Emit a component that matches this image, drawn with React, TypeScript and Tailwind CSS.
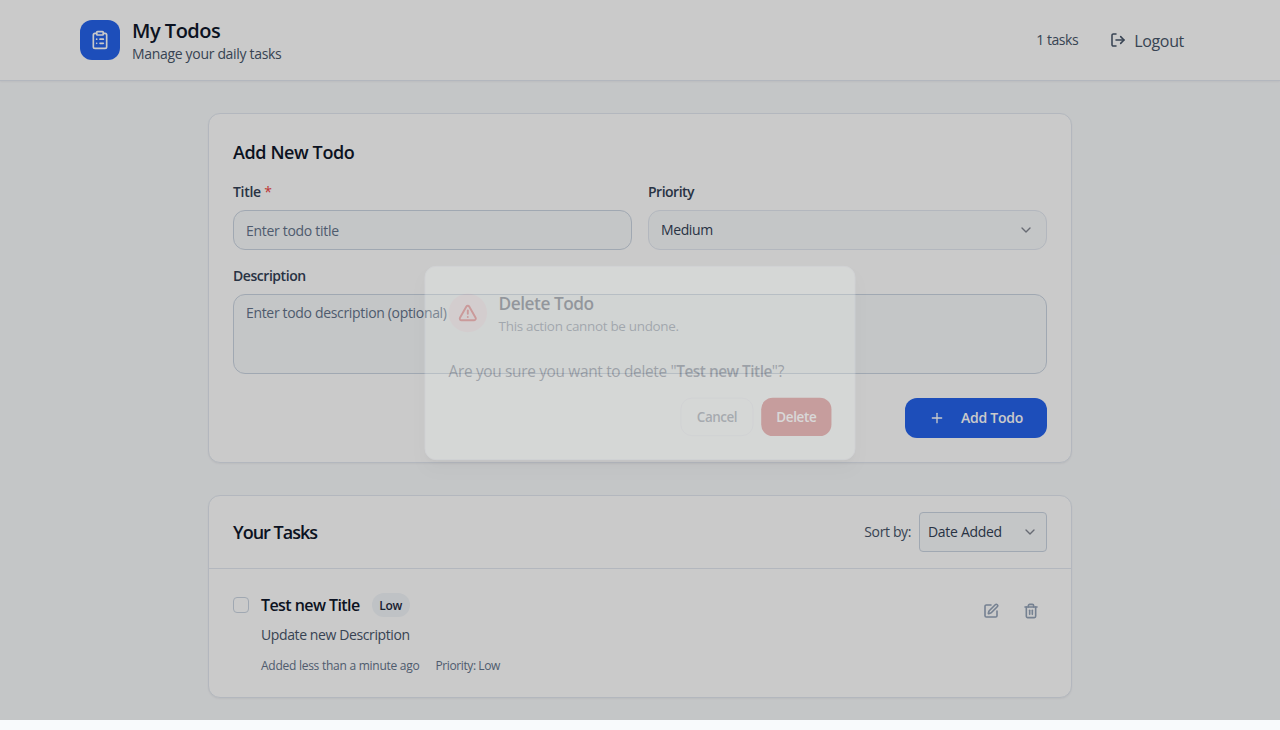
import React from 'react';
import { ClipboardList, LogOut, ChevronDown, Plus, SquarePen, Trash2, TriangleAlert } from 'lucide-react';

function Header() {
  return (
    <header className="flex h-[81px] items-center justify-between border-b border-[#e2e8f0] bg-white px-20 shadow-xs">
      <div className="flex items-center gap-3">
        <div className="flex size-10 items-center justify-center rounded-xl bg-[#2563eb] text-white">
          <ClipboardList size={20} />
        </div>
        <div className="whitespace-nowrap">
          <h1 className="-mb-px pt-px text-xl font-semibold tracking-[-0.5px] text-[#0f172a]">My Todos</h1>
          <p className="text-sm tracking-[-0.32px] text-[#475569]">Manage your daily tasks</p>
        </div>
      </div>
      <div className="flex items-center gap-4">
        <span className="text-sm tracking-[-0.45px] text-[#475569]">1 tasks</span>
        <button className="flex h-10 items-center gap-2 px-4 text-base tracking-[-0.33px] text-[#475569]">
          <LogOut size={16} strokeWidth={2.3} />
          <span className="pt-px">Logout</span>
        </button>
      </div>
    </header>
  );
}

function AddTodo() {
  return (
    <section className="rounded-xl border border-[#e2e8f0] bg-white p-6 shadow-xs">
      <h2 className="mb-4 text-lg font-semibold tracking-[-0.4px] text-[#0f172a]">Add New Todo</h2>
      <div className="grid grid-cols-2 gap-4">
        <div>
          <div className="mb-2 text-sm font-semibold tracking-[-0.3px] text-[#334155]">Title <span className="font-normal text-[#ef4444]">*</span></div>
          <div className="flex h-10 items-center rounded-xl border border-[#cbd5e1] bg-[#f8fafc] px-3 pt-0.5 text-sm tracking-[-0.3px] text-[#64748b]">Enter todo title</div>
        </div>
        <div>
          <div className="mb-2 text-sm font-semibold tracking-[-0.5px] text-[#334155]">Priority</div>
          <div className="flex h-10 items-center justify-between rounded-xl border border-[#e2e8f0] bg-[#f8fafc] px-3 text-sm tracking-[-0.4px] text-[#334155]">
            Medium
            <ChevronDown size={16} className="text-[#0f172a] opacity-50" />
          </div>
        </div>
      </div>
      <div className="mt-4">
        <div className="mb-2 text-sm font-semibold tracking-[-0.45px] text-[#334155]">Description</div>
        <div className="h-20 rounded-xl border border-[#cbd5e1] bg-[#f8fafc] px-3 py-2 text-sm tracking-[-0.33px] text-[#64748b]">Enter todo description (optional)</div>
      </div>
      <div className="mt-6 flex justify-end">
        <button className="flex h-10 w-[142px] items-center justify-between rounded-xl bg-[#2563eb] px-6 text-sm font-semibold tracking-[-0.25px] text-white">
          <Plus size={16} />
          <span>Add Todo</span>
        </button>
      </div>
    </section>
  );
}

function TaskList() {
  return (
    <section className="rounded-xl border border-[#e2e8f0] bg-white shadow-xs">
      <div className="flex items-center justify-between border-b border-[#e2e8f0] px-6 py-4">
        <h2 className="text-lg font-semibold tracking-[-1px] text-[#0f172a]">Your Tasks</h2>
        <div className="flex items-center gap-2">
          <span className="text-sm tracking-[-0.38px] text-[#475569]">Sort by:</span>
          <div className="flex h-10 w-32 items-center justify-between rounded border border-[#cbd5e1] bg-[#f8fafc] px-2 text-sm tracking-[-0.3px] text-[#334155]">
            Date Added
            <ChevronDown size={16} className="text-[#0f172a] opacity-50" />
          </div>
        </div>
      </div>
      <div className="flex items-start gap-3 p-6">
        <div className="mt-1 size-4 rounded border border-[#cbd5e1] bg-white" />
        <div className="flex-1">
          <div className="flex items-center gap-3">
            <h3 className="text-base font-semibold tracking-[-0.57px] text-[#0f172a]">Test new Title</h3>
            <span className="flex h-6 w-[38px] items-center justify-center rounded-full bg-[#f1f5f9] pt-0.5 text-xs font-semibold tracking-[-0.33px] text-[#1e293b]">Low</span>
          </div>
          <p className="mt-2 text-sm tracking-[-0.39px] text-[#475569]">Update new Description</p>
          <div className="mt-[13px] -mb-px flex gap-4 text-xs text-[#64748b]">
            <span className="tracking-[-0.26px]">Added less than a minute ago</span>
            <span className="tracking-[-0.4px]">Priority: Low</span>
          </div>
        </div>
        <div className="flex gap-2 text-[#94a3b8]">
          <button className="flex h-9 w-8 items-center justify-center"><SquarePen size={16} strokeWidth={2.4} /></button>
          <button className="flex h-9 w-8 items-center justify-center"><Trash2 size={16} strokeWidth={2.4} /></button>
        </div>
      </div>
    </section>
  );
}

function DeleteDialog() {
  return (
    <div className="w-[448px] scale-[0.962] rounded-xl border border-[#e2e8f0] bg-[#f5faf6] p-6 opacity-[0.27] shadow-lg">
      <div className="mb-6 flex items-center gap-3">
        <div className="flex size-10 items-center justify-center rounded-full bg-[#fee2e2] text-[#dc2626]">
          <TriangleAlert size={20} strokeWidth={2.4} />
        </div>
        <div>
          <h3 className="text-lg font-semibold tracking-[-0.52px] text-[#0f172a]">Delete Todo</h3>
          <p className="text-sm tracking-[-0.33px] text-[#475569]">This action cannot be undone.</p>
        </div>
      </div>
      <p className="mb-[15px] pt-px text-base tracking-[-0.33px] text-[#334155]">Are you sure you want to delete "<span className="font-semibold tracking-[-0.52px]">Test new Title</span>"?</p>
      <div className="flex justify-end gap-2">
        <button className="h-10 w-[76px] rounded-xl border border-[#e2e8f0] text-sm font-semibold tracking-[-0.5px] text-[#475569]">Cancel</button>
        <button className="h-10 w-[73px] rounded-xl bg-[#be2626] text-sm font-semibold tracking-[-0.35px] text-white">Delete</button>
      </div>
    </div>
  );
}

export default function App() {
  return (
    <div className="relative h-[730px] overflow-hidden bg-[#f8fafc] font-['Open_Sans','Noto_Sans',sans-serif]">
      <Header />
      <main className="mx-auto flex w-[864px] flex-col gap-8 pt-8">
        <AddTodo />
        <TaskList />
      </main>
      <div className="absolute inset-x-0 top-0 h-[720px] bg-black/[0.208]" />
      <div className="absolute inset-x-0 top-0 flex h-[726px] items-center justify-center">
        <DeleteDialog />
      </div>
    </div>
  );
}
